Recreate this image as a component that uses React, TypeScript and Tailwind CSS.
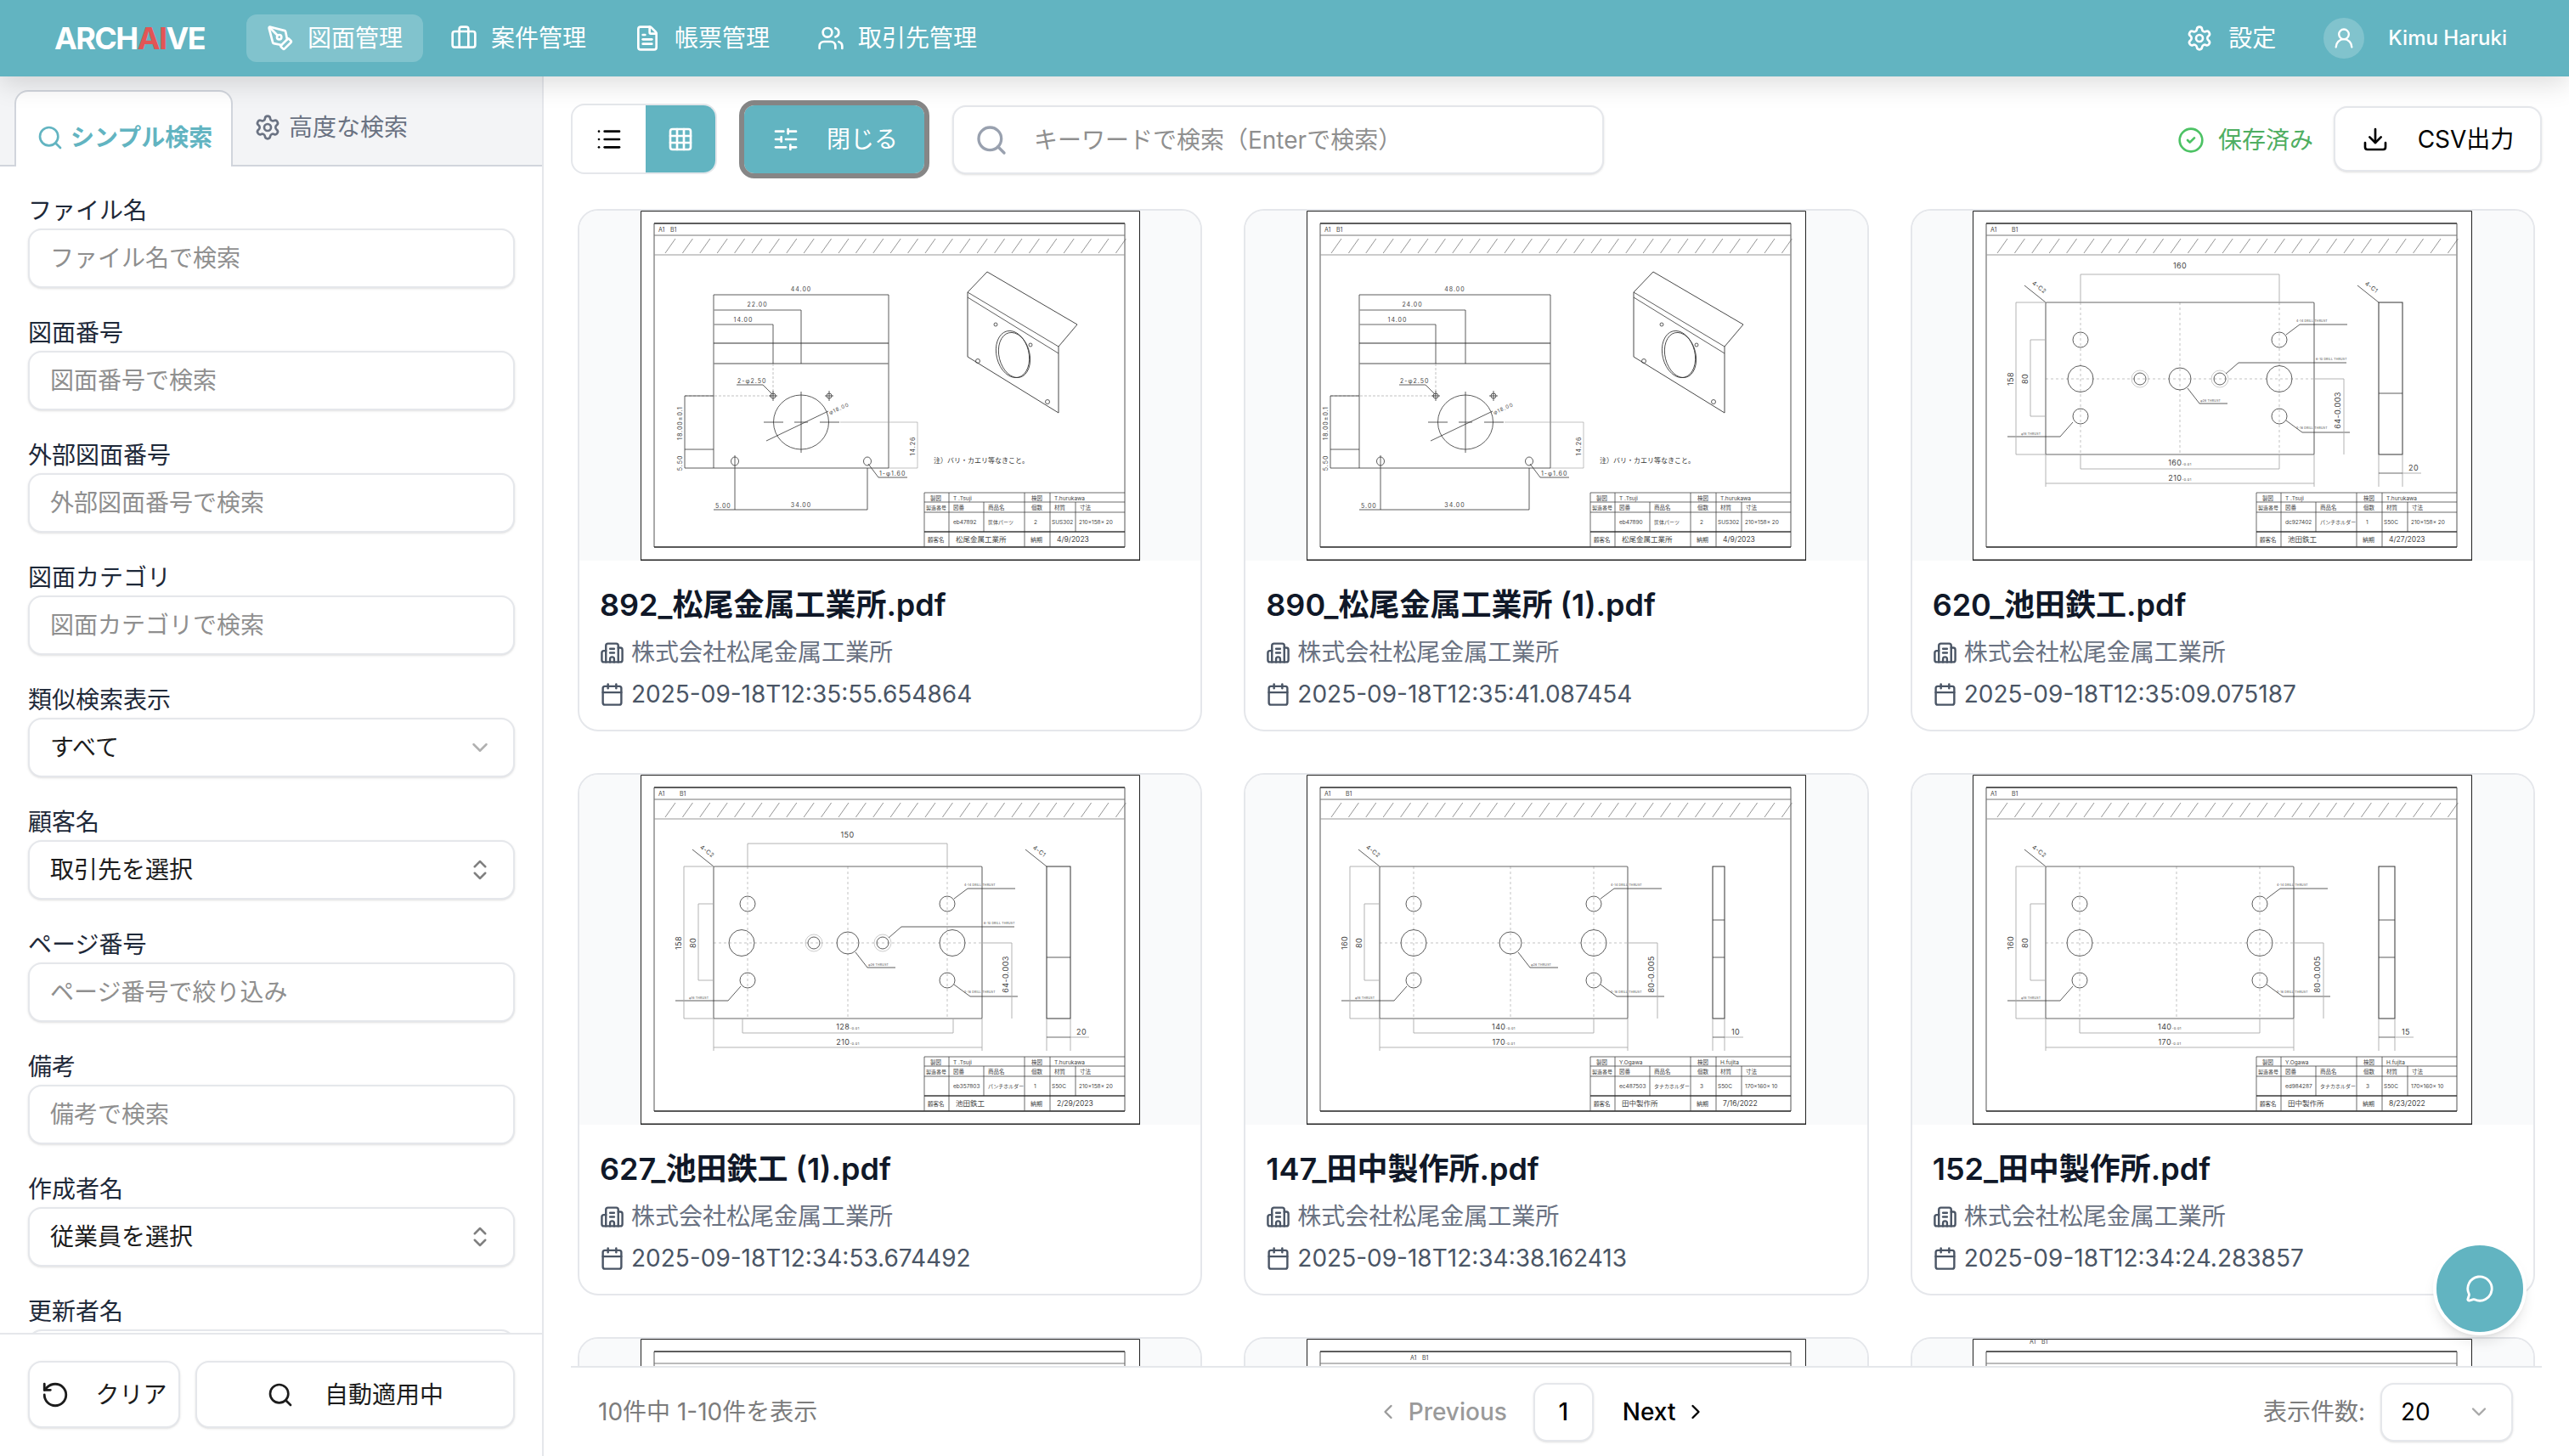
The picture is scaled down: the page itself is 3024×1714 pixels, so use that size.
import type { ReactNode } from 'react';
import {
  Briefcase, Building2, Calendar, ChevronDown, ChevronLeft, ChevronRight, ChevronsUpDown,
  CircleCheck, Download, FileText, Grid3x3, List, MessageCircle, PenTool, RotateCcw, Search,
  Settings, SlidersHorizontal, UserRound, Users,
} from 'lucide-react';

type Block = {
  drawer: string;
  checker: string;
  code: string;
  product: string;
  qty: string;
  material: string;
  size: string;
  customer: string;
  due: string;
};

const ink = '#333';
const soft = '#aaa';

function Sheet({ a1 = [21, 25], gap = 14, block, children }: { a1?: [number, number] | null; gap?: number; block?: Block; children?: ReactNode }) {
  const hatch = Array.from({ length: 27 }, (_, i) => 29 + i * 20.4);
  return (
    <svg viewBox="0 0 588 412" className="h-[412px] w-[588px] bg-white" fill="none">
      <path d="M0.5 412V.5H587.5V412" stroke="#222" />
      <path d="M0 411.2H588" stroke="#222" strokeWidth="1.5" />
      <path d="M16 396V15H570V396" stroke="#555" strokeWidth="1" />
      <path d="M16 15H570" stroke="#444" strokeWidth="1.5" />
      <path d="M16 396H570" stroke="#222" strokeWidth="1.5" />
      <path d="M16 29H570" stroke="#777" />
      <path d="M16 52H570" stroke="#999" strokeWidth="1.2" />
      {a1 && (
        <g fontSize="7" fill="#444">
          <text x={a1[0]} y={a1[1]}>A1</text>
          <text x={a1[0] + gap} y={a1[1]}>B1</text>
        </g>
      )}
      {hatch.map((x) => (
        <line key={x} x1={x} y1="50" x2={x + 12} y2="33" stroke="#666" strokeWidth="0.7" />
      ))}
      {children}
      {block && <TitleBlock b={block} />}
    </svg>
  );
}

function TitleBlock({ b }: { b: Block }) {
  const t = (x: number, y: number, s: string, size = 6.5, color = '#444') => (
    <text x={x} y={y} fontSize={size} fill={color}>
      {s}
    </text>
  );
  return (
    <g>
      <path d="M334 396V332H570M334 343H570M334 355H570M334 378H570" stroke="#444" strokeWidth="0.8" />
      <path d="M363 332V396M452 332V396M482 332V396M404 343V378M512 343V378" stroke="#444" strokeWidth="0.8" />
      <path d="M334 378H570" stroke="#222" strokeWidth="1.1" />
      {t(341, 341, '製図')}
      {t(368, 341, b.drawer)}
      {t(460, 341, '検図')}
      {t(487, 341, b.checker)}
      {t(336, 352, '製造番号', 6)}
      {t(368, 352, '図番')}
      {t(409, 352, '商品名')}
      {t(460, 352, '個数')}
      {t(487, 352, '材質')}
      {t(517, 352, '寸法')}
      {t(368, 369, b.code)}
      {t(409, 369, b.product, 6)}
      {t(463, 369, b.qty)}
      {t(484, 369, b.material)}
      {t(516, 369, b.size)}
      {t(338, 390, '顧客名')}
      {t(371, 390, b.customer, 8.5)}
      {t(459, 390, '納期', 7)}
      {t(490, 390, b.due, 8.5)}
    </g>
  );
}

function Bracket({ l, r, hx, x14, sizes, block }: { l: number; r: number; hx: number; x14: number; sizes: string[]; block: Block }) {
  return (
    <Sheet block={block}>
      <g stroke={ink} strokeWidth="0.8">
        <path d={`M${l} 99V303H${r}V99`} />
        <path d={`M${l} 156H${r}`} strokeWidth="1.2" />
        <path d={`M${l} 180H${r}`} stroke="#888" strokeWidth="1.4" />
        <path d={`M${l} 99H${r}`} />
        <path d={`M${l} 117H${hx}M${l} 134H${x14}`} stroke="#999" strokeWidth="1.3" />
        <path d={`M${hx} 117V180M${x14} 134V180`} />
        <path d={`M${x14} 180V218M${l - 34} 218H${x14}`} stroke="#999" strokeWidth="0.6" strokeDasharray="3 2" />
        <ellipse cx={hx} cy="249" rx="32.5" ry="32" />
        <path d={`M${hx} 213V285M${hx - 44} 249H${hx - 21}M${hx - 8} 249H${hx + 8}M${hx + 22} 249H${hx + 45}M${hx - 41} 271L${hx + 32} 236`} />
        <circle cx={x14} cy="218" r="3" />
        <path d={`M${x14 - 5} 218H${x14 + 5}M${x14} 212V224`} />
        <circle cx={hx + 33} cy="218" r="3" />
        <path d={`M${hx + 28} 218H${hx + 38}M${hx + 33} 212V224`} />
        <ellipse cx={l + 25} cy="295" rx="4.5" ry="5" />
        <ellipse cx={r - 25} cy="295" rx="4.5" ry="5" />
        <path d={`M${l + 25} 288V352M${r - 25} 303V352M${l} 352H${r - 25}`} />
        <path d={`M${l - 34} 218V303M${l - 34} 218H${l}M${l - 34} 281H${l}M${l - 34} 303H${l}`} />
        <path d={`M${hx + 46} 249H326V303H${r}`} stroke="#999" strokeWidth="0.6" />
        <path d={`M${x14 - 12} 205L${x14 - 1} 216M${x14 - 43} 205H${x14 - 12}M${r - 24} 298L${r - 12} 314H${r + 22}`} />
        <path d="M408 72L514 134L492 160V238L385 172V96Z" strokeWidth="0.9" />
        <path d="M385 102L492 168M385 96L492 160" />
        <ellipse cx="438" cy="169" rx="19" ry="28" transform="rotate(-14 438 169)" />
        <ellipse cx="440" cy="170" rx="18" ry="27" transform="rotate(-14 440 170)" />
        <circle cx="418" cy="134" r="2" />
        <circle cx="459" cy="158" r="2" />
        <circle cx="397" cy="177" r="2.5" />
        <circle cx="479" cy="225" r="2.5" />
      </g>
      <g fontSize="7" fill="#444" letterSpacing="1">
        <text x={(l + r) / 2} y="95" textAnchor="middle">{sizes[0]}</text>
        <text x={(l + hx) / 2} y="113" textAnchor="middle">{sizes[1]}</text>
        <text x={(l + x14) / 2} y="131" textAnchor="middle">{sizes[2]}</text>
        <text x={x14 - 42} y="203">2-φ2.50</text>
        <text x={r - 11} y="312">1-φ1.60</text>
        <text x={l + 2} y="350">5.00</text>
        <text x={(l + r) / 2} y="349" textAnchor="middle">34.00</text>
        <text transform={`translate(${l - 37} 250) rotate(-90)`} textAnchor="middle">18.00±0.1</text>
        <text transform={`translate(${l - 37} 297) rotate(-90)`} textAnchor="middle">5.50</text>
        <text transform="translate(323 277) rotate(-90)" textAnchor="middle">14.26</text>
        <text x={hx + 34} y="240" fontSize="6" transform={`rotate(-24 ${hx + 34} 240)`}>φ18.00</text>
      </g>
      <text x="345" y="297" fontSize="8" fill="#333">注）バリ・カエリ等なきこと。</text>
    </Sheet>
  );
}

type PlateProps = {
  right: number;
  cols: [number, number];
  large: [number, number];
  cx: number;
  center?: boolean;
  mids?: [number, number];
  top?: { y: number; label: string };
  bottom: { l: number; r: number; label: string };
  total: string;
  height: string;
  rv: [number, number];
  rvLines: number[];
  c1?: boolean;
  thick: string;
  side: string;
  block: Block;
};

function Plate({ right, cols, large, cx, center, mids, top, bottom, total, height, rv, rvLines, c1, thick, side, block }: PlateProps) {
  const [a, b] = cols;
  return (
    <Sheet block={block} gap={25}>
      <g stroke="#aaa" strokeWidth="0.7" strokeDasharray="3 3">
        <path d={`M${a} 108V287M${b} 108V287M${cx} 108V287M86 198H${right}`} />
      </g>
      <g stroke={ink} strokeWidth="0.8">
        <rect x="86" y="108" width={right - 86} height="179" rx="1" stroke="#666" strokeWidth="1.1" />
        <ellipse cx={large[0]} cy="198" rx="15" ry="15.5" />
        <ellipse cx={large[1]} cy="198" rx="15" ry="15.5" />
        {center && <ellipse cx={cx} cy="198" rx="13" ry="13" />}
        {mids?.map((m) => (
          <g key={m}>
            <circle cx={m} cy="198" r="7" />
            <circle cx={m} cy="198" r="10" stroke="#999" strokeWidth="0.5" />
          </g>
        ))}
        {[a, b].map((x) => (
          <g key={x}>
            <ellipse cx={x} cy="152" rx="9" ry="9" />
            <ellipse cx={x} cy="242" rx="9" ry="9" />
          </g>
        ))}
        <path d={`M${b + 8} 146L${b + 24} 134H${b + 80}`} />
        {mids && <path d={`M${mids[1] + 7} 192L${mids[1] + 22} 179H440`} />}
        {center && <path d={`M${cx + 9} 209L${cx + 23} 227H${cx + 56}`} />}
        <path d={`M${b + 8} 247L${b + 27} 261H${b + 83}`} />
        <path d="M118 249L103 266H41" />
        <path d="M61 88L86 108" />
        <rect x={rv[0]} y="108" width={rv[1] - rv[0]} height="179" strokeWidth="1" />
        {rvLines.map((y) => (
          <path key={y} d={`M${rv[0]} ${y}H${rv[1]}`} />
        ))}
        {c1 && <path d="M453 88L478 108" />}
      </g>
      <g stroke={soft} strokeWidth="0.9">
        <path d={`M51 108H86M51 287H86M51 108V287M68 152V242M68 152H86M68 242H86`} />
        <path d={`M86 287V325M${right} 287V325M86 321H${right}`} />
        <path d={`M${bottom.l} 287V304H${bottom.r}V287`} />
        <path d={`M${rv[0]} 287V325M${rv[1]} 287V325`} />
        <path d={`M${rv[1]} 309H${rv[1] + 22}`} />
        <path d={`M${right} 198H${right + 35}V287`} />
        {top && <path d={`M${a} ${top.y}H${b}M${a} ${top.y}V108M${b} ${top.y}V108`} />}
      </g>
      <path d={`M${rv[0]} 309H${rv[1]}`} stroke="#444" strokeWidth="0.8" />
      <g fill="#444" fontSize="9" textAnchor="middle" letterSpacing="0.4">
        {top && <text x={(a + b) / 2} y={top.y - 7}>{top.label}</text>}
        <text x={(bottom.l + bottom.r) / 2} y="300">{bottom.label}<tspan fontSize="4">-0.01</tspan></text>
        <text x={(86 + right) / 2} y="318">{total}<tspan fontSize="4">-0.01</tspan></text>
        <text transform="translate(48 198) rotate(-90)">{height}</text>
        <text transform="translate(65 198) rotate(-90)">80</text>
        <text transform={`translate(${right + 31} 235) rotate(-90)`}>{side}</text>
        <text x={rv[1] + 13} y="306">{thick}</text>
        <text transform="translate(77 92) rotate(38)" fontSize="7">4-C2</text>
        {c1 && <text transform="translate(468 92) rotate(38)" fontSize="7">4-C1</text>}
      </g>
      <g fill="#444" fontSize="3.5" letterSpacing="0.2">
        <text x={b + 20} y="131">4-14 DRILL THRUST</text>
        {mids && <text x="404" y="176">6-10 DRILL THRUST</text>}
        {center && <text x={cx + 24} y="225">φ26 THRUST</text>}
        <text x={b + 20} y="257">2-16 DRILL THRUST</text>
        <text x="57" y="264">φ16 THRUST</text>
      </g>
    </Sheet>
  );
}

const matsuoA: Block = { drawer: 'T .Tsuji', checker: 'T.hurukawa', code: 'eb47892', product: '筐体パーツ', qty: '2', material: 'SUS302', size: '210×158× 20', customer: '松尾金属工業所', due: '4/9/2023' };
const ikedaA: Block = { drawer: 'T .Tsuji', checker: 'T.hurukawa', code: 'dc927402', product: 'パンチホルダー', qty: '1', material: 'S50C', size: '210×158× 20', customer: '池田鉄工', due: '4/27/2023' };
const ikedaB: Block = { ...ikedaA, code: 'eb357803', due: '2/29/2023' };
const tanakaA: Block = { drawer: 'Y.Ogawa', checker: 'H.fujita', code: 'ec487503', product: 'タナカホルダー', qty: '3', material: 'S50C', size: '170×160× 10', customer: '田中製作所', due: '7/16/2022' };
const tanakaB: Block = { ...tanakaA, code: 'ed984287', due: '8/23/2022' };

const cards = [
  {
    name: '892_松尾金属工業所.pdf',
    date: '2025-09-18T12:35:55.654864',
    drawing: <Bracket l={86} r={292} hx={189} x14={156} sizes={['44.00', '22.00', '14.00']} block={matsuoA} />,
  },
  {
    name: '890_松尾金属工業所 (1).pdf',
    date: '2025-09-18T12:35:41.087454',
    drawing: <Bracket l={62} r={287} hx={187} x14={152} sizes={['48.00', '24.00', '14.00']} block={{ ...matsuoA, code: 'eb47890' }} />,
  },
  {
    name: '620_池田鉄工.pdf',
    date: '2025-09-18T12:35:09.075187',
    drawing: (
      <Plate right={402} cols={[127, 361]} large={[127, 361]} cx={244} center mids={[197, 291]} top={{ y: 75, label: '160' }}
        bottom={{ l: 127, r: 361, label: '160' }} total="210" height="158" rv={[478, 506]} rvLines={[215]} c1 thick="20" side="64-0.003" block={ikedaA} />
    ),
  },
  {
    name: '627_池田鉄工 (1).pdf',
    date: '2025-09-18T12:34:53.674492',
    drawing: (
      <Plate right={402} cols={[126, 361]} large={[119, 367]} cx={244} center mids={[204, 285]} top={{ y: 81, label: '150' }}
        bottom={{ l: 120, r: 368, label: '128' }} total="210" height="158" rv={[478, 506]} rvLines={[215]} c1 thick="20" side="64-0.003" block={ikedaB} />
    ),
  },
  {
    name: '147_田中製作所.pdf',
    date: '2025-09-18T12:34:38.162413',
    drawing: (
      <Plate right={378} cols={[126, 338]} large={[126, 338]} cx={240} center bottom={{ l: 126, r: 338, label: '140' }}
        total="170" height="160" rv={[478, 492]} rvLines={[171, 215]} thick="10" side="80-0.005" block={tanakaA} />
    ),
  },
  {
    name: '152_田中製作所.pdf',
    date: '2025-09-18T12:34:24.283857',
    drawing: (
      <Plate right={378} cols={[126, 338]} large={[126, 338]} cx={240} bottom={{ l: 126, r: 338, label: '140' }}
        total="170" height="160" rv={[478, 497]} rvLines={[171, 215]} thick="15" side="80-0.005" block={tanakaB} />
    ),
  },
];

const fields = [
  { label: 'ファイル名', placeholder: 'ファイル名で検索' },
  { label: '図面番号', placeholder: '図面番号で検索' },
  { label: '外部図面番号', placeholder: '外部図面番号で検索' },
  { label: '図面カテゴリ', placeholder: '図面カテゴリで検索' },
  { label: '類似検索表示', value: 'すべて', chevron: 'down' },
  { label: '顧客名', value: '取引先を選択', chevron: 'updown' },
  { label: 'ページ番号', placeholder: 'ページ番号で絞り込み' },
  { label: '備考', placeholder: '備考で検索' },
  { label: '作成者名', value: '従業員を選択', chevron: 'updown' },
  { label: '更新者名', placeholder: '' },
];

function Field({ label, placeholder, value, chevron }: { label: string; placeholder?: string; value?: string; chevron?: string }) {
  return (
    <div className="mb-[33px]">
      <div className="mb-[1px] h-10 text-[28px] leading-10 text-gray-800">{label}</div>
      {value ? (
        <div className="flex h-[70px] items-center justify-between rounded-2xl border-2 border-gray-200 bg-white pr-[24px] pl-6 text-[28px] text-[#1c1c1c] shadow-sm">
          {value}
          {chevron === 'down' ? (
            <ChevronDown size={30} className="text-[#b0b0b0]" />
          ) : (
            <ChevronsUpDown size={30} className="text-[#808080]" />
          )}
        </div>
      ) : (
        <input
          readOnly
          placeholder={placeholder}
          className="h-[70px] w-full rounded-2xl border-2 border-gray-200 bg-white px-6 text-[28px] shadow-sm placeholder:text-[#8f8f8f]"
        />
      )}
    </div>
  );
}

function NavItem({ icon, label, active }: { icon: ReactNode; label: string; active?: boolean }) {
  return (
    <div className={`flex h-14 items-center gap-4 rounded-xl px-6 text-[28px] text-white ${active ? 'bg-white/20' : ''}`}>
      {icon}
      <span>{label}</span>
    </div>
  );
}

function Card({ name, date, drawing }: { name?: string; date?: string; drawing: ReactNode }) {
  return (
    <div className="h-[615px] overflow-hidden rounded-3xl border-2 border-gray-200 bg-white">
      <div className="flex h-[412px] justify-center bg-gray-50">{drawing}</div>
      {name && (
        <div className="px-6 pt-6">
          <div className="text-[36px] leading-14 font-semibold text-gray-900">{name}</div>
          <div className="mt-2 flex h-10 items-center gap-2 text-[28px] text-gray-500">
            <Building2 size={29} className="text-gray-600" />
            株式会社松尾金属工業所
          </div>
          <div className="mt-[9px] flex h-10 items-center gap-2 text-[28px] text-gray-600">
            <Calendar size={29} />
            {date}
          </div>
        </div>
      )}
    </div>
  );
}

export default function App() {
  return (
    <div className="flex h-screen flex-col overflow-hidden bg-white font-['Inter','Noto_Sans_CJK_JP',sans-serif]">
      <header className="relative z-10 flex h-[90px] shrink-0 items-center bg-[#62b4c1] pr-[73px] pl-[64px] shadow-[0_8px_32px_rgba(0,0,0,0.14)]">
        <div className="w-[178px] text-[36px] font-bold tracking-[-1.6px] text-white">
          ARCH<span className="text-[#e25555]">AI</span>VE
        </div>
        <nav className="ml-[48px] flex gap-2">
          <NavItem active label="図面管理" icon={<PenTool size={32} />} />
          <NavItem label="案件管理" icon={<Briefcase size={32} />} />
          <NavItem label="帳票管理" icon={<FileText size={32} />} />
          <NavItem label="取引先管理" icon={<Users size={32} />} />
        </nav>
        <div className="ml-auto flex items-center text-white">
          <Settings size={32} />
          <span className="ml-[18px] text-[28px]">設定</span>
          <div className="ml-14 flex size-12 items-center justify-center rounded-full bg-white/20">
            <UserRound size={28} />
          </div>
          <span className="ml-7 text-[24px] font-medium">Kimu Haruki</span>
        </div>
      </header>

      <div className="flex min-h-0 flex-1">
        <aside className="flex w-[640px] shrink-0 flex-col border-r-2 border-gray-200 bg-white">
          <div className="flex h-[106px] shrink-0 items-end border-b-2 border-gray-300 bg-gray-100 pl-[17px]">
            <div className="-mb-[2px] flex h-[90px] w-[257px] items-center gap-2 rounded-t-2xl border-2 border-b-0 border-gray-300 bg-white pt-5 pl-6 text-[28px] font-bold text-[#62b4c1]">
              <Search size={32} />
              シンプル検索
            </div>
            <div className="mb-[24px] ml-[25px] flex h-10 items-center gap-[9px] text-[28px] text-gray-500">
              <Settings size={32} />
              高度な検索
            </div>
          </div>
          <div className="min-h-0 flex-1 overflow-hidden pt-8 pr-[32px] pl-[33px]">
            {fields.map((f) => (
              <Field key={f.label} {...f} />
            ))}
          </div>
          <div className="flex h-[145px] shrink-0 gap-[18px] border-t-2 border-gray-200 pt-[31px] pr-[32px] pl-[33px]">
            <button className="flex h-[79px] w-[179px] items-center justify-center gap-[30px] rounded-2xl border-2 border-gray-200 bg-white text-[28px] text-[#1c1c1c] shadow-sm">
              <RotateCcw size={34} />
              クリア
            </button>
            <button className="flex h-[79px] w-[376px] items-center justify-center gap-9 rounded-2xl border-2 border-gray-200 bg-white text-[28px] text-[#1c1c1c] shadow-sm">
              <Search size={32} />
              自動適用中
            </button>
          </div>
        </aside>

        <main className="flex min-w-0 flex-1 flex-col pr-8 pl-[32px]">
          <div className="flex h-[156px] shrink-0 items-start pt-[32px]">
            <div className="flex h-[83px] w-[172px] overflow-hidden rounded-2xl border-2 border-gray-200 bg-white">
              <div className="flex w-[86px] items-center justify-center">
                <List size={32} className="text-black" />
              </div>
              <div className="flex flex-1 items-center justify-center bg-[#62b4c1]">
                <Grid3x3 size={32} className="text-white" />
              </div>
            </div>
            <button className="mt-[2px] ml-[32px] flex h-[80px] w-[212px] items-center gap-[32px] rounded-xl bg-[#62b4c1] pl-[33px] text-[28px] text-white outline-[6px] outline-[#868686]">
              <SlidersHorizontal size={32} />
              閉じる
            </button>
            <div className="mt-[2px] ml-[33px] flex h-[81px] w-[767px] items-center gap-[30px] rounded-2xl border-2 border-gray-200 bg-white pl-[24px] text-[28px] text-[#8f8f8f] shadow-sm">
              <Search size={40} className="text-gray-400" />
              キーワードで検索（Enterで検索）
            </div>
            <div className="mt-[2px] ml-auto flex h-[81px] items-center gap-[16px] text-[28px] text-[#4fae62]">
              <CircleCheck size={32} className="text-[#4cc264]" />
              保存済み
            </div>
            <button className="mt-[3px] ml-[24px] flex h-[77px] w-[245px] items-center justify-center gap-[34px] rounded-2xl border-2 border-gray-200 bg-white text-[28px] text-black shadow-sm">
              <Download size={32} />
              CSV出力
            </button>
          </div>

          <div className="min-h-0 flex-1 overflow-hidden px-2">
            <div className="grid grid-cols-3 gap-[49px]">
              {cards.map((c) => (
                <Card key={c.name} {...c} />
              ))}
              <Card drawing={<Sheet a1={null} />} />
              <Card drawing={<Sheet a1={[122, 25]} />} />
              <Card drawing={<Sheet a1={[67, 6]} />} />
            </div>
          </div>

          <footer className="flex h-[106px] shrink-0 items-center justify-between border-t-2 border-gray-200 pr-[34px] pl-[32px]">
            <span className="text-[28px] text-[#7c7c7c]">10件中 1-10件を表示</span>
            <div className="ml-1 flex items-center text-[28px] font-medium">
              <div className="flex items-center gap-[10px] text-[#9a9a9a]">
                <ChevronLeft size={28} />
                Previous
              </div>
              <div className="mr-[34px] ml-[31px] flex h-[69px] w-[71px] items-center justify-center rounded-2xl border-2 border-gray-200 bg-white text-black shadow-sm">
                1
              </div>
              <div className="flex items-center gap-[10px] text-black">
                Next
                <ChevronRight size={28} />
              </div>
            </div>
            <div className="flex items-center gap-[18px]">
              <span className="text-[28px] text-[#7c7c7c]">表示件数:</span>
              <div className="flex h-[69px] w-[156px] items-center justify-between rounded-2xl border-2 border-gray-200 bg-white pr-6 pl-[22px] text-[28px] text-black shadow-sm">
                20
                <ChevronDown size={28} className="text-[#a8a8a8]" />
              </div>
            </div>
          </footer>
        </main>
      </div>

      <button className="absolute top-[1462px] left-[2864px] z-20 flex size-[110px] items-center justify-center rounded-full border-4 border-white bg-[#62b4c1] shadow-lg">
        <MessageCircle size={34} className="text-white" />
      </button>
    </div>
  );
}
